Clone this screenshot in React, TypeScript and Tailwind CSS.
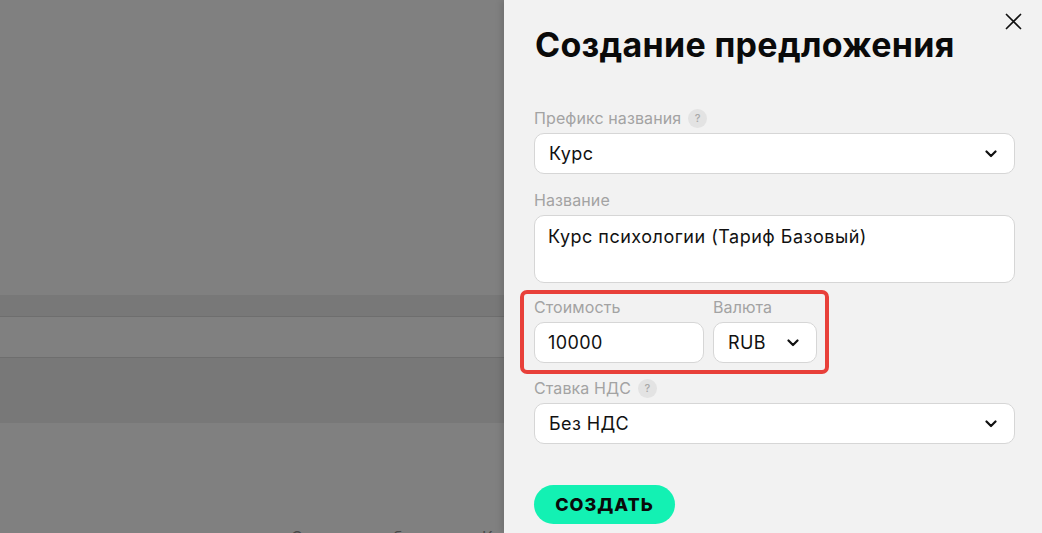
import React from 'react';

const font = "font-['Inter','Noto_Sans',sans-serif]";

function Chevron() {
  return (
    <svg width="12" height="8" viewBox="0 0 12 8" fill="none">
      <path d="M1.5 1.5L6 6L10.5 1.5" stroke="#111" strokeWidth="2.2" strokeLinecap="round" strokeLinejoin="round" />
    </svg>
  );
}

function Help() {
  return (
    <span className="ml-[7px] inline-flex h-[19px] w-[19px] items-center justify-center rounded-full bg-[#e3e3e3] text-[11px] font-medium text-[#a8a8a8]">
      ?
    </span>
  );
}

function Label({ children, help }: { children: React.ReactNode; help?: boolean }) {
  return (
    <div className="mb-[5px] flex h-[20px] items-center text-[16px] leading-[20px] tracking-[0.1px] text-[#a3a3a3]">
      {children}
      {help && <Help />}
    </div>
  );
}

function Select({ value, className = '' }: { value: string; className?: string }) {
  return (
    <div
      className={`flex h-[41px] items-center justify-between rounded-[10px] border border-[#d6d6d6] bg-white pl-[14px] pr-[17px] text-[18px] tracking-[0.4px] text-[#111] ${className}`}
    >
      <span>{value}</span>
      <Chevron />
    </div>
  );
}

export default function App() {
  return (
    <div className={`flex h-[533px] w-full overflow-hidden ${font}`}>
      {/* dimmed page behind the drawer */}
      <div className="flex flex-1 flex-col overflow-hidden">
        <div className="h-[295px] shrink-0 bg-[#808080]" />
        <div className="h-[22px] shrink-0 border-b border-[#6e6e6e] bg-[#787878]" />
        <div className="h-[41px] shrink-0 border-b border-[#6e6e6e] bg-[#808080]" />
        <div className="h-[65px] shrink-0 bg-[#787878]" />
        <div className="flex-1 bg-[#808080] pt-[102px] text-[16px] leading-[24px] text-[#4a4a4a]">
          <div className="flex">
            <span className="ml-[291px] w-[102px]">Сумма</span>
            <span className="w-[89px]">б</span>
            <span>К</span>
          </div>
        </div>
      </div>

      {/* drawer */}
      <div className="relative w-[538px] shrink-0 bg-[#f2f2f2] pl-[30px] pr-[27px] pt-[20px] shadow-[-3px_0_6px_rgba(0,0,0,0.12)]">
        <button className="absolute right-[19px] top-[12px] p-[1px]">
          <svg width="17" height="17" viewBox="0 0 17 17" fill="none">
            <path d="M1.5 1.5L15.5 15.5M15.5 1.5L1.5 15.5" stroke="#111" strokeWidth="1.7" strokeLinecap="round" />
          </svg>
        </button>

        <h1 className="ml-[1px] text-[34px] font-bold leading-[50px] tracking-[0.3px] text-[#0a0a0a]">Создание предложения</h1>

        <div className="mt-[38px]">
          <Label help>Префикс названия</Label>
          <Select value="Курс" />
        </div>

        <div className="mt-[16px]">
          <Label>Название</Label>
          <div className="h-[68px] rounded-[10px] border border-[#d6d6d6] bg-white px-[13px] pt-[9px] text-[18px] leading-[24px] tracking-[0.5px] text-[#111]">
            Курс психологии (Тариф Базовый)
          </div>
        </div>

        <div className="ml-[-14px] mt-[7px] w-fit rounded-[7px] border-[4px] border-[#e8403a] pb-[7px] pl-[10px] pr-[8px] pt-[3px]">
          <div className="flex gap-[9px]">
            <div className="w-[170px]">
              <Label>Стоимость</Label>
              <div className="flex h-[41px] items-center rounded-[10px] border border-[#d6d6d6] bg-white px-[13px] text-[18px] tracking-[0.4px] text-[#111]">
                10000
              </div>
            </div>
            <div className="w-[104px]">
              <Label>Валюта</Label>
              <Select value="RUB" className="pr-[14px]" />
            </div>
          </div>
        </div>

        <div className="mt-[4px]">
          <Label help>Ставка НДС</Label>
          <Select value="Без НДС" />
        </div>

        <button className="mt-[41px] flex h-[39px] w-[141px] items-center justify-center rounded-full bg-[#13f1b3] text-[18px] font-extrabold tracking-[1px] text-[#0a0a0a]">
          СОЗДАТЬ
        </button>
      </div>
    </div>
  );
}
